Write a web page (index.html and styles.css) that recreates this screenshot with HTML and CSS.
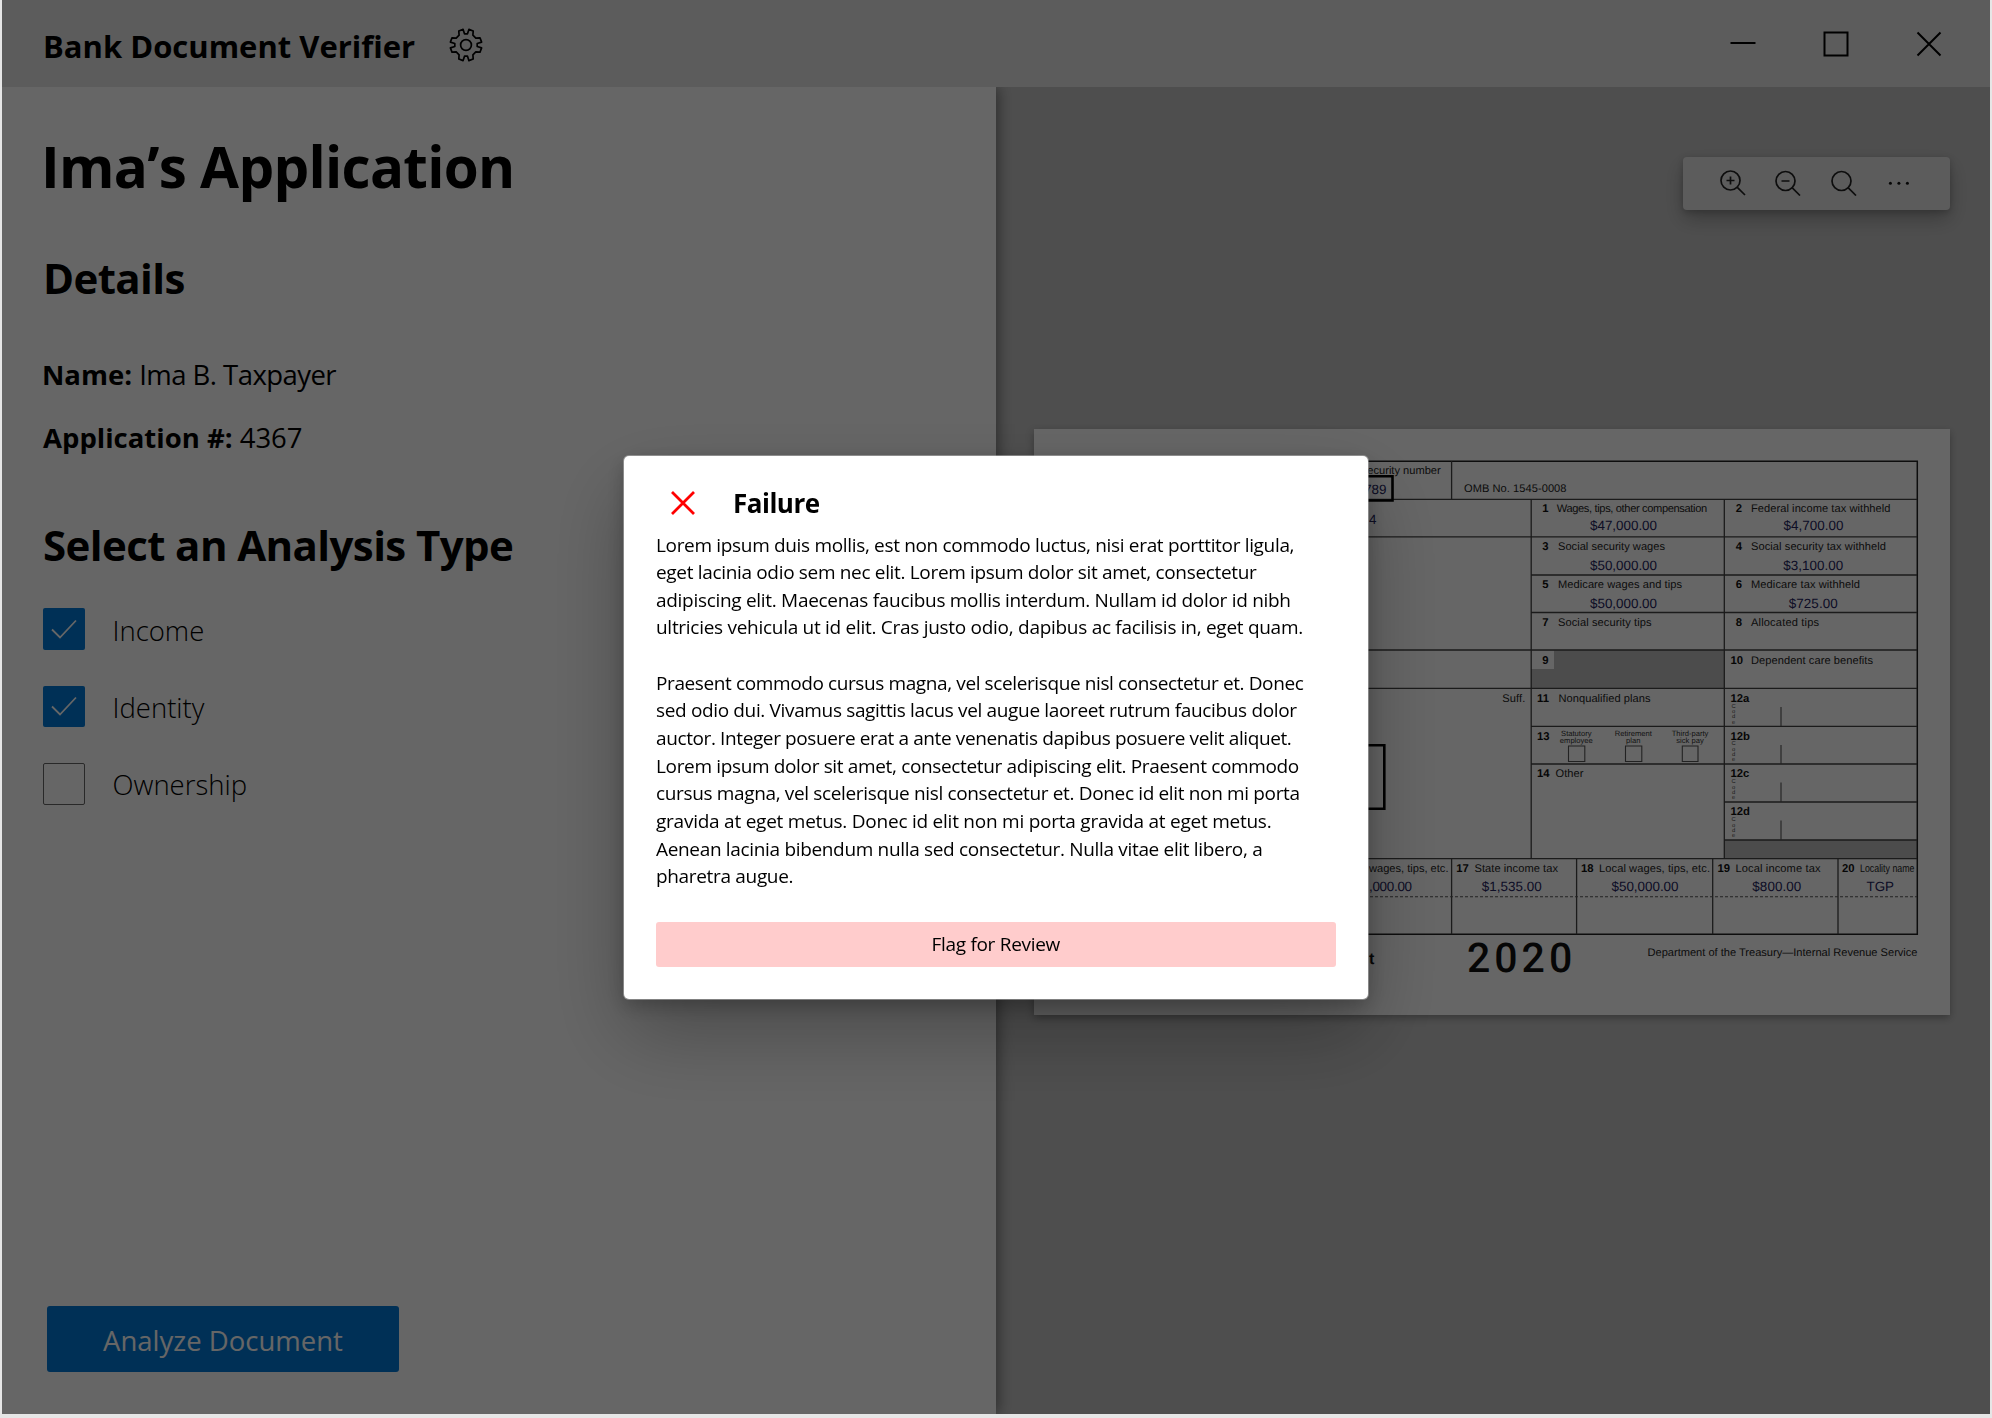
FILE: index.html
```
<!DOCTYPE html>
<html lang="en">
<head>
<meta charset="utf-8">
<title>Bank Document Verifier</title>
<link rel="stylesheet" href="styles.css">
</head>
<body>
<div class="window">
  <header class="titlebar">
    <span class="app-name">Bank Document Verifier</span>
    <svg class="gear" viewBox="0 0 34 34" width="34" height="34"><g transform="translate(17 17)"><path d="M1.500-11.200L2.900-15.600L7.200-14L6.900-9.800L9.800-6.900L14-7.200L15.600-2.900L11.200-1.500V1.500L15.600 2.900L14 7.200L9.800 6.900L6.900 9.800L7.200 14L2.900 15.600L1.500 11.200H-1.500L-2.900 15.600L-7.200 14L-6.900 9.800L-9.800 6.900L-14 7.200L-15.600 2.900L-11.200 1.500V-1.500L-15.600-2.900L-14-7.200L-9.800-6.900L-6.900-9.800L-7.200-14L-2.900-15.600L-1.500-11.200Z"/><circle r="5.400"/></g></svg>
    <div class="window-controls">
      <svg viewBox="0 0 26 26" width="26" height="26"><path d="M.5 12H25.500"/></svg>
      <svg viewBox="0 0 26 26" width="26" height="26"><rect x="1.500" y="1.500" width="23" height="23"/></svg>
      <svg viewBox="0 0 26 26" width="26" height="26"><path d="M1.500 1.500L24.500 24.500M24.500 1.500L1.500 24.500"/></svg>
    </div>
  </header>

  <main class="content">
    <section class="form-panel">
      <h1>Ima’s Application</h1>
      <h2 class="details">Details</h2>
      <p class="name"><strong>Name:</strong> <span>Ima B. Taxpayer</span></p>
      <p class="number"><strong>Application #:</strong> <span>4367</span></p>
      <h2 class="select">Select an Analysis Type</h2>
      <ul class="options">
        <li><span class="box checked"><svg viewBox="0 0 26 20" width="26" height="20"><path d="M1 10.500L9 18.500L25 1.500"/></svg></span><span class="label">Income</span></li>
        <li><span class="box checked"><svg viewBox="0 0 26 20" width="26" height="20"><path d="M1 10.500L9 18.500L25 1.500"/></svg></span><span class="label">Identity</span></li>
        <li><span class="box"></span><span class="label">Ownership</span></li>
      </ul>
      <button class="analyze">Analyze Document</button>
    </section>

    <section class="preview">
      <div class="toolbar">
        <svg viewBox="0 0 26 26" width="26" height="26"><circle cx="10.500" cy="10.500" r="9.500"/><path d="M17.300 17.300L25 25M6.500 10.500H14.500M10.500 6.500V14.500"/></svg>
        <svg viewBox="0 0 26 26" width="26" height="26"><circle cx="10.500" cy="11" r="9.500"/><path d="M17.300 17.800L25 25.500M6.500 11H14.500"/></svg>
        <svg viewBox="0 0 26 26" width="26" height="26"><circle cx="10.500" cy="11" r="9.500"/><path d="M17.300 17.800L25 25.500"/></svg>
        <svg class="dots" viewBox="0 0 26 26" width="26" height="26"><circle cx="4.400" cy="13.200" r="1.500"/><circle cx="12.900" cy="13.200" r="1.500"/><circle cx="21.400" cy="13.200" r="1.500"/></svg>
      </div>

      <svg class="paper" viewBox="1034 429 916 586" width="916" height="586">
        <g class="shade">
          <path d="M1531 650H1724.300V688.300H1531ZM1724.300 840H1917.300V858.700H1724.300Z"/>
          <path class="light" d="M1531 650.500H1554V669H1531Z"/>
        </g>
        <g class="rules">
          <path class="heavy" d="M1060 461.300H1917.300V934.300H1060"/>
          <path d="M1060 499.300H1917M1060 536.800H1917M1531 575H1917M1531 612.500H1917M1060 650H1917M1060 688.300H1917M1531 726.300H1917M1531 764H1917M1724 802H1917M1724 840H1917M1060 858.700H1917"/>
          <path d="M1451.600 461V499.300M1531.200 499.300V858.700M1724.300 499.300V858.700M1451.600 858.700V934.300M1576.600 858.700V934.300M1712.700 858.700V934.300M1838 858.700V934.300"/>
          <path class="thin" d="M1781 707V726M1781 745V764M1781 782.500V802M1781 820.500V840"/>
          <path class="thin" d="M1568.500 746H1584.800V761.500H1568.500ZM1625.500 746H1641.800V761.500H1625.500ZM1682.300 746H1698V761.500H1682.300Z"/>
          <path class="thin" stroke-dasharray="3 2" d="M1340 896.700H1917"/>
          <path class="frame" d="M1340 476.200H1392.500V500.500H1340M1340 745.200H1384.300V808.800H1340"/>
        </g>
        <g class="caption">
          <text x="1440.700" y="473.700" text-anchor="end">security number</text>
          <text x="1464" y="492" textLength="102.500">OMB No. 1545-0008</text>
          <text x="1556.700" y="512.300" textLength="150.500">Wages, tips, other compensation</text>
          <text x="1558" y="550.200" textLength="107">Social security wages</text>
          <text x="1558" y="588" textLength="124">Medicare wages and tips</text>
          <text x="1558" y="625.700" textLength="93.500">Social security tips</text>
          <text x="1558.500" y="701.700" textLength="92">Nonqualified plans</text>
          <text x="1555.500" y="777.200" textLength="28">Other</text>
          <text x="1751" y="512.300" textLength="139.500">Federal income tax withheld</text>
          <text x="1751" y="550.200" textLength="135">Social security tax withheld</text>
          <text x="1751" y="588" textLength="109">Medicare tax withheld</text>
          <text x="1751" y="625.700" textLength="68">Allocated tips</text>
          <text x="1751" y="663.500" textLength="122">Dependent care benefits</text>
          <text x="1502.300" y="701.700" textLength="23">Suff.</text>
          <text x="1369" y="872.300" textLength="79.500">wages, tips, etc.</text>
          <text x="1474.500" y="872.300" textLength="83.500">State income tax</text>
          <text x="1599" y="872.300" textLength="111">Local wages, tips, etc.</text>
          <text x="1735.500" y="872.300" textLength="85">Local income tax</text>
          <text x="1860" y="872.300" textLength="54.500" lengthAdjust="spacingAndGlyphs">Locality name</text>
          <text x="1647.500" y="955.500" textLength="270">Department of the Treasury—Internal Revenue Service</text>
        </g>
        <g class="num">
          <text x="1542.300" y="512.300">1</text><text x="1542.300" y="550.200">3</text><text x="1542.300" y="588">5</text><text x="1542.300" y="625.700">7</text><text x="1542.300" y="663.500">9</text>
          <text x="1537" y="701.700">11</text><text x="1537" y="739.500">13</text><text x="1537" y="777.200">14</text>
          <text x="1735.700" y="512.300">2</text><text x="1735.700" y="550.200">4</text><text x="1735.700" y="588">6</text><text x="1735.700" y="625.700">8</text><text x="1730.500" y="663.500">10</text>
          <text x="1730.500" y="701.700">12a</text><text x="1730.500" y="739.500">12b</text><text x="1730.500" y="777.200">12c</text><text x="1730.500" y="815.200">12d</text>
          <text x="1456.300" y="872.300">17</text><text x="1581" y="872.300">18</text><text x="1717.500" y="872.300">19</text><text x="1842" y="872.300">20</text>
          <text class="copy" x="1369" y="963.500">t</text>
        </g>
        <g class="tiny">
          <text x="1576.300" y="735.500">Statutory</text><text x="1576.300" y="743">employee</text>
          <text x="1633.300" y="735.500">Retirement</text><text x="1633.300" y="743">plan</text>
          <text x="1690" y="735.500">Third-party</text><text x="1690" y="743">sick pay</text>
        </g>
        <g class="code">
          <text><tspan x="1733.500" y="707.700">C</tspan><tspan x="1733.500" y="713">o</tspan><tspan x="1733.500" y="718.300">d</tspan><tspan x="1733.500" y="723.700">e</tspan></text>
          <text><tspan x="1733.500" y="745.400">C</tspan><tspan x="1733.500" y="750.700">o</tspan><tspan x="1733.500" y="756">d</tspan><tspan x="1733.500" y="761.400">e</tspan></text>
          <text><tspan x="1733.500" y="783.200">C</tspan><tspan x="1733.500" y="788.500">o</tspan><tspan x="1733.500" y="793.800">d</tspan><tspan x="1733.500" y="799.200">e</tspan></text>
          <text><tspan x="1733.500" y="821.200">C</tspan><tspan x="1733.500" y="826.500">o</tspan><tspan x="1733.500" y="831.800">d</tspan><tspan x="1733.500" y="837.200">e</tspan></text>
        </g>
        <g class="value">
          <text x="1386.500" y="493.700" text-anchor="end">789</text>
          <text x="1369" y="523.700">4</text>
          <text x="1590" y="530" textLength="67">$47,000.00</text>
          <text x="1590" y="569.700" textLength="67">$50,000.00</text>
          <text x="1590" y="607.500" textLength="67">$50,000.00</text>
          <text x="1783.500" y="530" textLength="60">$4,700.00</text>
          <text x="1783.300" y="569.700" textLength="60">$3,100.00</text>
          <text x="1788.700" y="607.500" textLength="49">$725.00</text>
          <text x="1369" y="891.300" textLength="43">,000.00</text>
          <text x="1481.700" y="891.300" textLength="60">$1,535.00</text>
          <text x="1611.500" y="891.300" textLength="67">$50,000.00</text>
          <text x="1752.300" y="891.300" textLength="49">$800.00</text>
          <text x="1866.500" y="891.300" textLength="27.500">TGP</text>
        </g>
        <text class="year" x="1467" y="971.500">2020</text>
      </svg>
    </section>
  </main>
</div>

<div class="backdrop">
  <div class="dialog" role="dialog">
    <div class="dialog-head">
      <svg viewBox="0 0 24 24" width="24" height="24"><path d="M1 1L23 23M23 1L1 23"/></svg>
      <h3>Failure</h3>
    </div>
    <p class="first">
      <span>Lorem ipsum duis mollis, est non commodo luctus, nisi erat porttitor ligula,</span>
      <span>eget lacinia odio sem nec elit. Lorem ipsum dolor sit amet, consectetur</span>
      <span>adipiscing elit. Maecenas faucibus mollis interdum. Nullam id dolor id nibh</span>
      <span>ultricies vehicula ut id elit. Cras justo odio, dapibus ac facilisis in, eget quam.</span>
    </p>
    <p class="second">
      <span>Praesent commodo cursus magna, vel scelerisque nisl consectetur et. Donec</span>
      <span>sed odio dui. Vivamus sagittis lacus vel augue laoreet rutrum faucibus dolor</span>
      <span>auctor. Integer posuere erat a ante venenatis dapibus posuere velit aliquet.</span>
      <span>Lorem ipsum dolor sit amet, consectetur adipiscing elit. Praesent commodo</span>
      <span>cursus magna, vel scelerisque nisl consectetur et. Donec id elit non mi porta</span>
      <span>gravida at eget metus. Donec id elit non mi porta gravida at eget metus.</span>
      <span>Aenean lacinia bibendum nulla sed consectetur. Nulla vitae elit libero, a</span>
      <span>pharetra augue.</span>
    </p>
    <button class="flag">Flag for Review</button>
  </div>
</div>
</body>
</html>
```
FILE: styles.css
```
* { box-sizing: border-box; }
body {
  margin: 0;
  background: #e6e6e6;
  color: #000;
  font-family: "Open Sans", "Noto Sans", sans-serif;
}
h1, h2, h3, p, ul { margin: 0; padding: 0; }
button { border: 0; font-family: inherit; }

.window {
  display: flex;
  flex-direction: column;
  height: 1414px;
  margin: 0 2px;
  overflow: hidden;
}

/* Title bar */
.titlebar {
  position: relative;
  z-index: 2;
  display: flex;
  align-items: center;
  flex: none;
  height: 87px;
  padding: 0 48px 0 41px;
  background: #e6e6e6;
}
.app-name {
  width: 372px;
  padding-top: 4px;
  font-size: 31px;
  font-weight: 700;
  line-height: 44px;
  white-space: nowrap;
}
.gear { margin: 2px 0 0 33.500px; fill: none; stroke: #000; stroke-width: 1.700; stroke-linejoin: round; }
.window-controls { display: flex; gap: 67px; margin-left: auto; }
.window-controls svg { fill: none; stroke: #000; stroke-width: 2; }

/* Left panel */
.content { display: flex; flex: 1; }
.form-panel {
  position: relative;
  z-index: 1;
  display: flex;
  flex-direction: column;
  align-items: flex-start;
  width: 994px;
  padding: 41.500px 41px 42px;
  background: #fff;
  box-shadow: 2px 0 14px rgba(0, 0, 0, .45);
}
h1, h2, .name, .number { white-space: nowrap; }
h1 { margin-left: -2px; font-size: 56.500px; line-height: 76px; letter-spacing: -.7px; }
h2 { font-size: 42px; line-height: 58px; letter-spacing: -.6px; }
.details { margin-top: 44px; }
.name, .number { font-size: 27.500px; line-height: 38px; }
.name { margin: 49px 0 0 -1px; }
.name span { letter-spacing: -.55px; }
.number { margin-top: 25px; }
.select { margin-top: 59.500px; }
.options {
  display: flex;
  flex-direction: column;
  gap: 35.400px;
  margin-top: 34px;
  list-style: none;
}
.options li { display: flex; align-items: center; gap: 28px; height: 42px; }
.box {
  display: flex;
  align-items: center;
  justify-content: center;
  width: 41.500px;
  height: 41.500px;
  border: 1.500px solid #666;
  border-radius: 2px;
}
.box.checked { border: 0; background: #0078d7; }
.box svg { fill: none; stroke: #fff; stroke-width: 1.800; }
.label {
  padding-top: 3px;
  font-size: 27.500px;
  font-weight: 300;
  line-height: 38px;
}
.analyze {
  width: 352px;
  height: 66px;
  margin: auto 0 0 4px;
  padding: 2px 0 0;
  border-radius: 3px;
  background: #0078d7;
  color: #fff;
  font-size: 27.500px;
}

/* Document preview */
.preview {
  display: flex;
  flex: 1;
  flex-direction: column;
  align-items: flex-end;
  padding: 69.500px 40px 0 0;
  background: #c4c4c4;
}
.toolbar {
  display: flex;
  align-items: center;
  gap: 29.300px;
  width: 267px;
  height: 53.500px;
  padding: 0 0 1px 37px;
  border-radius: 4px;
  background: #e6e6e6;
  box-shadow: 0 9px 20px rgba(0, 0, 0, .25), 0 2px 6px rgba(0, 0, 0, .18);
}
.toolbar svg { flex: none; fill: none; stroke: #222; stroke-width: 1.700; }
.toolbar .dots { fill: #111; stroke: none; }

.paper {
  margin-top: 219px;
  background: #fff;
  box-shadow: 0 3px 8px rgba(0, 0, 0, .3);
  font-family: "Liberation Sans", Arial, sans-serif;
  text-rendering: geometricPrecision;
}
.shade { fill: #bfbfbf; }
.shade .light { fill: #fff; }
.rules { fill: none; stroke: #444; stroke-width: 1.300; }
.rules .heavy { stroke: #222; stroke-width: 1.500; }
.rules .thin { stroke: #555; stroke-width: 1.100; }
.rules .frame { stroke: #000; stroke-width: 2.600; }
.caption { fill: #222; font-size: 11.100px; }
.num { fill: #111; font-size: 11.300px; font-weight: 700; }
.num .copy { font-size: 16px; }
.tiny { fill: #333; font-size: 7.600px; text-anchor: middle; }
.code { fill: #444; font-size: 5.800px; text-anchor: middle; }
.value { fill: #23235c; font-size: 13.400px; }
.year { fill: #111; font: 500 41px Roboto, sans-serif; letter-spacing: 4px; }

/* Dialog */
.backdrop {
  position: fixed;
  z-index: 10;
  inset: 0 2px 4px;
  display: flex;
  align-items: flex-start;
  background: rgba(0, 0, 0, .6);
}
.dialog {
  width: 744.500px;
  height: 543.500px;
  margin: 455.500px 0 0 621.500px;
  padding: 0 32.500px;
  border-radius: 5px;
  background: #fff;
  box-shadow: 0 0 0 1px rgba(190, 190, 190, .5), 0 35px 80px rgba(0, 0, 0, .28), 0 7px 20px rgba(0, 0, 0, .24);
}
.dialog-head { display: flex; align-items: center; gap: 38px; height: 76px; padding: 18px 0 0 15px; }
.dialog-head svg { fill: none; stroke: #f00; stroke-width: 2.800; }
h3 { font-size: 26px; line-height: 36px; letter-spacing: -.5px; }
.dialog p { font-size: 19px; line-height: 27.650px; white-space: nowrap; }
.dialog p span { display: block; letter-spacing: -.33px; }
.second { margin-top: 27.650px; }
.first span:nth-child(3) { letter-spacing: -.3px; }
.first span:nth-child(4) { letter-spacing: -.285px; }
.second span:nth-child(1), .second span:nth-child(3) { letter-spacing: -.39px; }
.second span:nth-child(2), .second span:nth-child(4), .second span:nth-child(5) { letter-spacing: -.35px; }
.second span:nth-child(6) { letter-spacing: -.24px; }
.flag {
  display: block;
  width: 100%;
  height: 44.500px;
  margin-top: 31px;
  padding: 0;
  border-radius: 3px;
  background: #ffcccc;
  color: #000;
  font-size: 19px;
  letter-spacing: -.3px;
}
```
